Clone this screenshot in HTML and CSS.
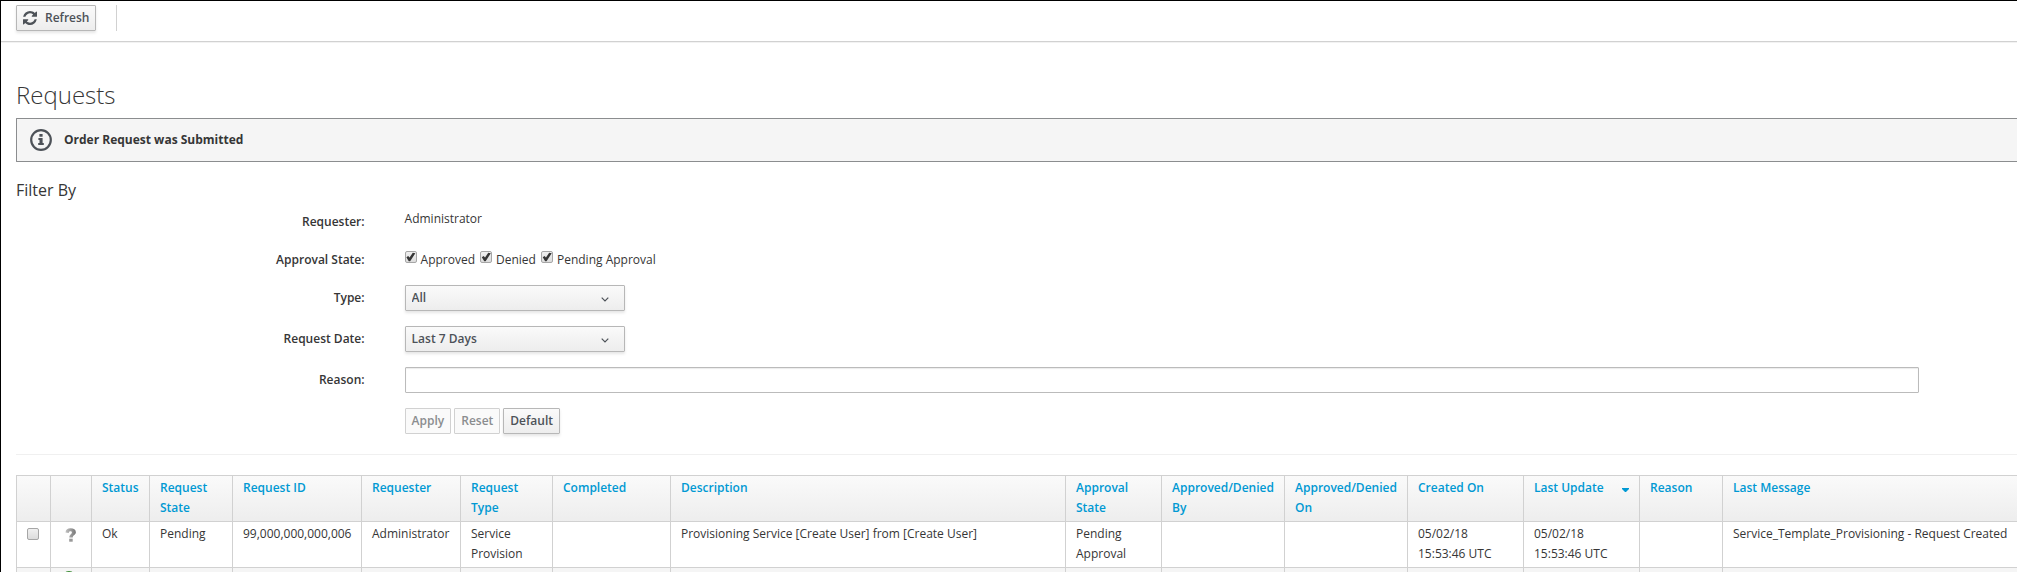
FILE: index.html
```html
<!DOCTYPE html>
<html lang="en">
<head>
<meta charset="utf-8">
<title>Requests</title>
<link rel="stylesheet" href="styles.css">
</head>
<body>
<div class="toolbar">
  <button type="button" class="btn btn-refresh">
    <svg class="refresh-icon" viewBox="0 0 1536 1536" aria-hidden="true"><path fill="currentColor" d="M1511 928q0 5-1 7-64 268-268 434.500T764 1536q-146 0-282.500-55T238 1324l-129 129q-19 19-45 19t-45-19-19-45V960q0-26 19-45t45-19h448q26 0 45 19t19 45-19 45l-137 137q71 66 161 102t187 36q134 0 250-65t186-179q11-17 53-117 8-23 30-23h192q13 0 22.500 9.500t9.500 22.500zm25-800v448q0 26-19 45t-45 19h-448q-26 0-45-19t-19-45 19-45l138-138Q969 256 768 256q-134 0-250 65T332 500q-11 17-53 117-8 23-30 23H50q-13 0-22.500-9.500T18 608v-7q65-268 270-434.500T768 0q146 0 284 55.500T1297 212l130-129q19-19 45-19t45 19 19 45z"/></svg>
    Refresh
  </button>
  <span class="toolbar-divider"></span>
</div>
<main class="content">
  <h1>Requests</h1>
  <div class="alert" role="status">
    <svg class="info-icon" viewBox="0 0 22 22" aria-hidden="true"><circle cx="11" cy="11" r="9.800" fill="none" stroke="currentColor" stroke-width="2.200"/><path fill="currentColor" d="M9.400 5h3.200v2.700H9.400zM8.400 9h4.200v5h1.200v2H8.200v-2h1.300v-3H8.400z"/></svg>
    <strong>Order Request was Submitted</strong>
  </div>
  <h2>Filter By</h2>
  <form class="filters">
    <div class="row">
      <span class="label">Requester:</span>
      <div class="field">Administrator</div>
    </div>
    <div class="row">
      <span class="label">Approval State:</span>
      <div class="field checks">
        <label><input type="checkbox" checked>Approved</label>
        <label><input type="checkbox" checked>Denied</label>
        <label><input type="checkbox" checked>Pending Approval</label>
      </div>
    </div>
    <div class="row">
      <label class="label" for="type">Type:</label>
      <div class="field"><select id="type"><option>All</option></select></div>
    </div>
    <div class="row">
      <label class="label" for="date">Request Date:</label>
      <div class="field"><select id="date"><option>Last 7 Days</option></select></div>
    </div>
    <div class="row">
      <label class="label" for="reason">Reason:</label>
      <div class="field"><input type="text" id="reason"></div>
    </div>
    <div class="row">
      <span class="label"></span>
      <div class="field actions">
        <button type="button" class="btn" disabled>Apply</button>
        <button type="button" class="btn" disabled>Reset</button>
        <button type="button" class="btn">Default</button>
      </div>
    </div>
  </form>
  <hr>
  <table>
    <colgroup>
      <col class="w-check"><col class="w-icon"><col class="w-status"><col class="w-state"><col class="w-id"><col class="w-requester"><col class="w-type"><col class="w-completed"><col class="w-description"><col class="w-approval"><col class="w-denied"><col class="w-denied"><col class="w-date"><col class="w-date"><col class="w-reason"><col>
    </colgroup>
    <thead>
      <tr>
        <th></th><th></th>
        <th><a href="#">Status</a></th>
        <th><a href="#">Request State</a></th>
        <th><a href="#">Request ID</a></th>
        <th><a href="#">Requester</a></th>
        <th><a href="#">Request Type</a></th>
        <th><a href="#">Completed</a></th>
        <th><a href="#">Description</a></th>
        <th><a href="#">Approval State</a></th>
        <th><a href="#">Approved/Denied By</a></th>
        <th><a href="#">Approved/Denied On</a></th>
        <th><a href="#">Created On</a></th>
        <th><a href="#" class="sorted">Last Update<svg class="caret" viewBox="0 0 7 4" aria-hidden="true"><path fill="currentColor" d="M0 0h7v1L4 4H3L0 1z"/></svg></a></th>
        <th><a href="#">Reason</a></th>
        <th><a href="#">Last Message</a></th>
      </tr>
    </thead>
    <tbody>
      <tr>
        <td class="center"><input type="checkbox" aria-label="Select request"></td>
        <td class="center"><svg class="status-icon" viewBox="0 0 12 14" role="img" aria-label="Pending"><defs><linearGradient id="grey" gradientUnits="userSpaceOnUse" x1="0" y1="0" x2="11" y2="0"><stop stop-color="#c4c4c4"/><stop offset="1" stop-color="#777"/></linearGradient></defs><path fill="url(#grey)" d="M.5 4.500C.7 1.500 2.700.300 5.500.300c3.200 0 5.400 1.500 5.400 4 0 2.600-3.200 3-3.200 5.200H4.300c0-3 2.600-3.300 2.600-5 0-.8-.6-1.200-1.500-1.200-1 0-1.500.6-1.700 1.700z"/><path fill="#999" d="M4.200 10.700h3.500v3H4.200z"/></svg></td>
        <td>Ok</td>
        <td>Pending</td>
        <td>99,000,000,000,006</td>
        <td>Administrator</td>
        <td>Service Provision</td>
        <td></td>
        <td>Provisioning Service [Create User] from [Create User]</td>
        <td>Pending Approval</td>
        <td></td>
        <td></td>
        <td>05/02/18 15:53:46 UTC</td>
        <td>05/02/18 15:53:46 UTC</td>
        <td></td>
        <td>Service_Template_Provisioning - Request Created</td>
      </tr>
      <tr>
        <td></td>
        <td class="approved"><svg class="approved-icon" viewBox="0 0 16 16" role="img" aria-label="Approved"><circle cx="8" cy="8" r="7.500" fill="#5cae50" stroke="#3f8f3a"/></svg></td>
        <td></td><td></td><td></td><td></td><td></td><td></td><td></td><td></td><td></td><td></td><td></td><td></td><td></td><td></td>
      </tr>
    </tbody>
  </table>
</main>
</body>
</html>
```
FILE: styles.css
```css
* {
  box-sizing: border-box;
}

html {
  height: 100%;
  overflow: hidden;
}

body {
  height: 100%;
  margin: 0;
  overflow: hidden;
  border-top: 1px solid #000;
  border-left: 1px solid #000;
  background: #fff;
  color: #363636;
  font: 12px/20px "Open Sans", sans-serif;
}

button,
input,
select {
  margin: 0;
  font: inherit;
  color: inherit;
}

.toolbar {
  display: flex;
  gap: 20px;
  padding: 4px 15px 10px;
  border-bottom: 1px solid #d1d1d1;
  box-shadow: 0 1px 0 #f2f2f2;
}

.toolbar-divider {
  width: 1px;
  background: #d1d1d1;
}

.btn,
select {
  height: 26px;
  border: 1px solid #b7b7b7;
  border-radius: 1px;
  background: linear-gradient(#fafafa, #ededed);
  box-shadow: 0 2px 3px rgba(3, 3, 3, 0.1);
  color: #4d5258;
  font-weight: 600;
}

.btn {
  padding: 2px 6px;
}

.btn:disabled {
  border-color: #d1d1d1;
  background: #fafafa;
  box-shadow: none;
  color: #8b8d8f;
}

.btn-refresh {
  display: flex;
  align-items: center;
  gap: 8px;
}

.refresh-icon {
  width: 14px;
  height: 14px;
}

.content {
  padding-left: 15px;
}

h1 {
  margin: 40px 0 10px;
  font-size: 24px;
  font-weight: 300;
  line-height: 26px;
}

.alert {
  display: flex;
  align-items: center;
  gap: 12px;
  padding: 11px 13px;
  border: 1px solid #8b8d8f;
  border-right: 0;
  border-radius: 1px 0 0 1px;
  background: #f5f5f5;
}

.info-icon {
  width: 22px;
  height: 22px;
  margin: -1px 0;
  color: #4d5258;
}

h2 {
  margin: 18px 0 9px;
  font-size: 16px;
  font-weight: 400;
  line-height: 20px;
}

.row {
  display: grid;
  grid-template-columns: 17.42% 75.7%;
  column-gap: 40px;
  margin-bottom: 15px;
}

.label {
  padding-top: 3px;
  font-weight: 600;
  text-align: right;
}

.field {
  display: flex;
}

.checks {
  gap: 5px;
  padding-top: 3px;
}

.checks label {
  display: flex;
  gap: 4px;
}

input[type="checkbox"] {
  display: block;
  flex: none;
  width: 12px;
  height: 12px;
  margin-top: 1px;
  appearance: none;
  border: 1px solid #a6a6a6;
  border-radius: 2px;
  background: linear-gradient(#f0f0f0, #dcdcdc);
}

input[type="checkbox"]:checked::before {
  display: block;
  height: 10px;
  background: #363636;
  clip-path: polygon(8% 52%, 26% 40%, 40% 56%, 72% 8%, 98% 12%, 46% 92%, 32% 92%);
  content: "";
}

select {
  width: 220px;
  padding: 0 6px;
  appearance: none;
  background: url("data:image/svg+xml,%3Csvg xmlns='http://www.w3.org/2000/svg' viewBox='0 0 8 5'%3E%3Cpath d='M.7.700 4 4 7.300.700' fill='none' stroke='%234d5258' stroke-width='1.200'/%3E%3C/svg%3E") right 15px top 11px / 8px 5px no-repeat, linear-gradient(#fafafa, #ededed);
}

input[type="text"] {
  width: 100%;
  height: 26px;
  padding: 2px 6px;
  border: 1px solid #bbb;
  border-radius: 1px;
  box-shadow: inset 0 1px 1px rgba(3, 3, 3, 0.08);
}

.actions {
  gap: 3px;
}

hr {
  margin: 20px 0;
  border: 0;
  border-top: 1px solid #f0f0f0;
}

table {
  width: 100%;
  table-layout: fixed;
  border-collapse: collapse;
}

th,
td {
  height: 46px;
  padding: 2px 10px 3px;
  border: 1px solid #d1d1d1;
  text-align: left;
  vertical-align: top;
}

th:last-child,
td:last-child {
  padding-right: 0;
  border-right: 0;
  white-space: nowrap;
}

thead tr {
  background: linear-gradient(#fafafa, #ededed);
}

th a {
  color: #0099d3;
  font-weight: 600;
  text-decoration: none;
}

.sorted {
  display: flex;
  align-items: center;
  justify-content: space-between;
}

.caret {
  width: 7px;
  height: 4px;
  margin-top: 3px;
}

tbody tr:nth-child(even) {
  background: #f5f5f5;
}

.center input[type="checkbox"] {
  margin-top: 4px;
}

.status-icon {
  display: block;
  width: 12px;
  height: 14px;
  margin: 4px 0 0 4px;
}

.approved {
  padding-top: 0;
}

.approved-icon {
  display: block;
  width: 16px;
  height: 16px;
  margin-top: 3px;
}

.w-check { width: 34px; }
.w-icon { width: 41px; }
.w-status { width: 58px; }
.w-state { width: 83px; }
.w-id { width: 129px; }
.w-requester { width: 99px; }
.w-type { width: 92px; }
.w-completed { width: 118px; }
.w-description { width: 395px; }
.w-approval { width: 96px; }
.w-denied { width: 123px; }
.w-date { width: 116px; }
.w-reason { width: 83px; }
```
